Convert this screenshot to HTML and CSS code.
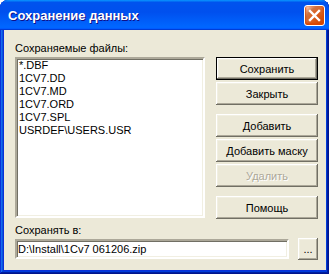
FILE: index.html
```html
<!DOCTYPE html>
<html lang="ru">
<head>
  <meta charset="UTF-8">
  <title>Сохранение данных</title>
  <link rel="stylesheet" href="styles.css">
</head>
<body>
  <div class="window">
    <div class="title-bar">
      <span class="title-text">Сохранение данных</span>
      <button class="close-btn" aria-label="Закрыть">
        <svg width="13" height="13" viewBox="0 0 13 13">
          <path d="M2 2 L11 11 M11 2 L2 11" stroke="#fff" stroke-width="2.4" stroke-linecap="square" fill="none"/>
        </svg>
      </button>
    </div>

    <div class="window-body">
      <div class="main">
        <div class="files">
          <div class="caption">Сохраняемые файлы:</div>
          <ul class="listbox">
            <li>*.DBF</li>
            <li>1CV7.DD</li>
            <li>1CV7.MD</li>
            <li>1CV7.ORD</li>
            <li>1CV7.SPL</li>
            <li>USRDEF\USERS.USR</li>
          </ul>
        </div>

        <div class="buttons">
          <div class="group">
            <button class="btn default">Сохранить</button>
            <button class="btn">Закрыть</button>
          </div>
          <div class="group">
            <button class="btn">Добавить</button>
            <button class="btn">Добавить маску</button>
            <button class="btn" disabled>Удалить</button>
          </div>
          <div class="group">
            <button class="btn">Помощь</button>
          </div>
        </div>
      </div>

      <div class="target">
        <div class="caption">Сохранять в:</div>
        <div class="path-row">
          <div class="field">D:\Install\1Cv7 061206.zip</div>
          <button class="btn browse">...</button>
        </div>
      </div>
    </div>
  </div>
</body>
</html>
```

FILE: styles.css
```css
* {
  box-sizing: border-box;
}

body {
  margin: 0;
  background: #fff;
  font-family: "Liberation Sans", Arial, sans-serif;
  font-size: 11px;
  color: #000;
}

.window {
  width: 329px;
  height: 274px;
  display: flex;
  flex-direction: column;
  background: #0831d9;
  border-radius: 8px 8px 0 0;
  box-shadow: inset -1px -1px #00138c, inset 1px 1px #0831d9,
    inset -2px -2px #001ea0, inset 2px 2px #166aee,
    inset -3px -3px #003bda, inset 3px 3px #0855dd;
}

/* заголовок окна */
.title-bar {
  flex: none;
  height: 30px;
  display: flex;
  align-items: flex-start;
  justify-content: space-between;
  padding: 0 4px 0 8px;
  border-radius: 8px 8px 0 0;
  background: linear-gradient(180deg, #0997ff, #0053ee 8%, #0050ee 40%, #0066ff 88%, #0066ff 93%, #005bff 95%, #003dd7 96%, #003dd7);
}

.title-text {
  margin-top: 8px;
  font-size: 13px;
  font-weight: bold;
  color: #fff;
  text-shadow: 1px 1px #0f1089;
}

.close-btn {
  margin-top: 5px;
  width: 21px;
  height: 21px;
  padding: 0;
  display: flex;
  align-items: center;
  justify-content: center;
  border: 1px solid #fff;
  border-radius: 3px;
  background: radial-gradient(circle at 90% 90%, #cc4600 0, #dc6527 55%, #cd7546 70%, #ffccb2 90%, #fff 100%);
  box-shadow: inset 0 -1px 2px 1px #da4600;
}

/* клиентская область */
.window-body {
  flex: 1;
  margin: 0 3px 4px 4px;
  padding: 12px 8px 10px 11px;
  background: #ece9d8;
  display: flex;
  flex-direction: column;
}

.main {
  display: flex;
  gap: 11px;
}

.files {
  width: 190px;
  display: flex;
  flex-direction: column;
  gap: 2px;
}

.caption {
  height: 13px;
  line-height: 13px;
}

.listbox {
  margin: 0;
  padding: 0 0 0 1px;
  list-style: none;
  height: 161px;
  background: #fff;
  border: 2px solid;
  border-color: #aca899 #fff #fff #aca899;
  box-shadow: inset 1px 1px #716f64, inset -1px -1px #f1efe2;
}

.listbox li {
  height: 13px;
  line-height: 13px;
  padding-left: 1px;
}

.buttons {
  width: 102px;
  padding-top: 15px;
  display: flex;
  flex-direction: column;
  gap: 9px;
}

.group {
  display: flex;
  flex-direction: column;
  gap: 2px;
}

.btn {
  height: 23px;
  padding: 0;
  font-family: inherit;
  font-size: 11px;
  font-weight: normal;
  color: #000;
  background: #ece9d8;
  border: none;
  border-radius: 0;
  box-shadow: inset -1px -1px #716f64, inset 1px 1px #fff,
    inset -2px -2px #aca899, inset 2px 2px #f1efe2;
}

.btn.default {
  border: 1px solid #000;
}

.btn:disabled {
  color: #aca899;
  text-shadow: 1px 1px #fff;
}

.target {
  margin-top: 5px;
}

.target .caption {
  margin-bottom: 1px;
}

.path-row {
  display: flex;
  align-items: center;
  gap: 9px;
  height: 22px;
}

.field {
  flex: 1;
  height: 20px;
  line-height: 16px;
  padding-left: 1px;
  background: #fff;
  border: 2px solid;
  border-color: #aca899 #fff #fff #aca899;
  box-shadow: inset 1px 1px #716f64, inset -1px -1px #f1efe2;
}

.btn.browse {
  width: 20px;
  height: 22px;
  line-height: 22px;
}
```
